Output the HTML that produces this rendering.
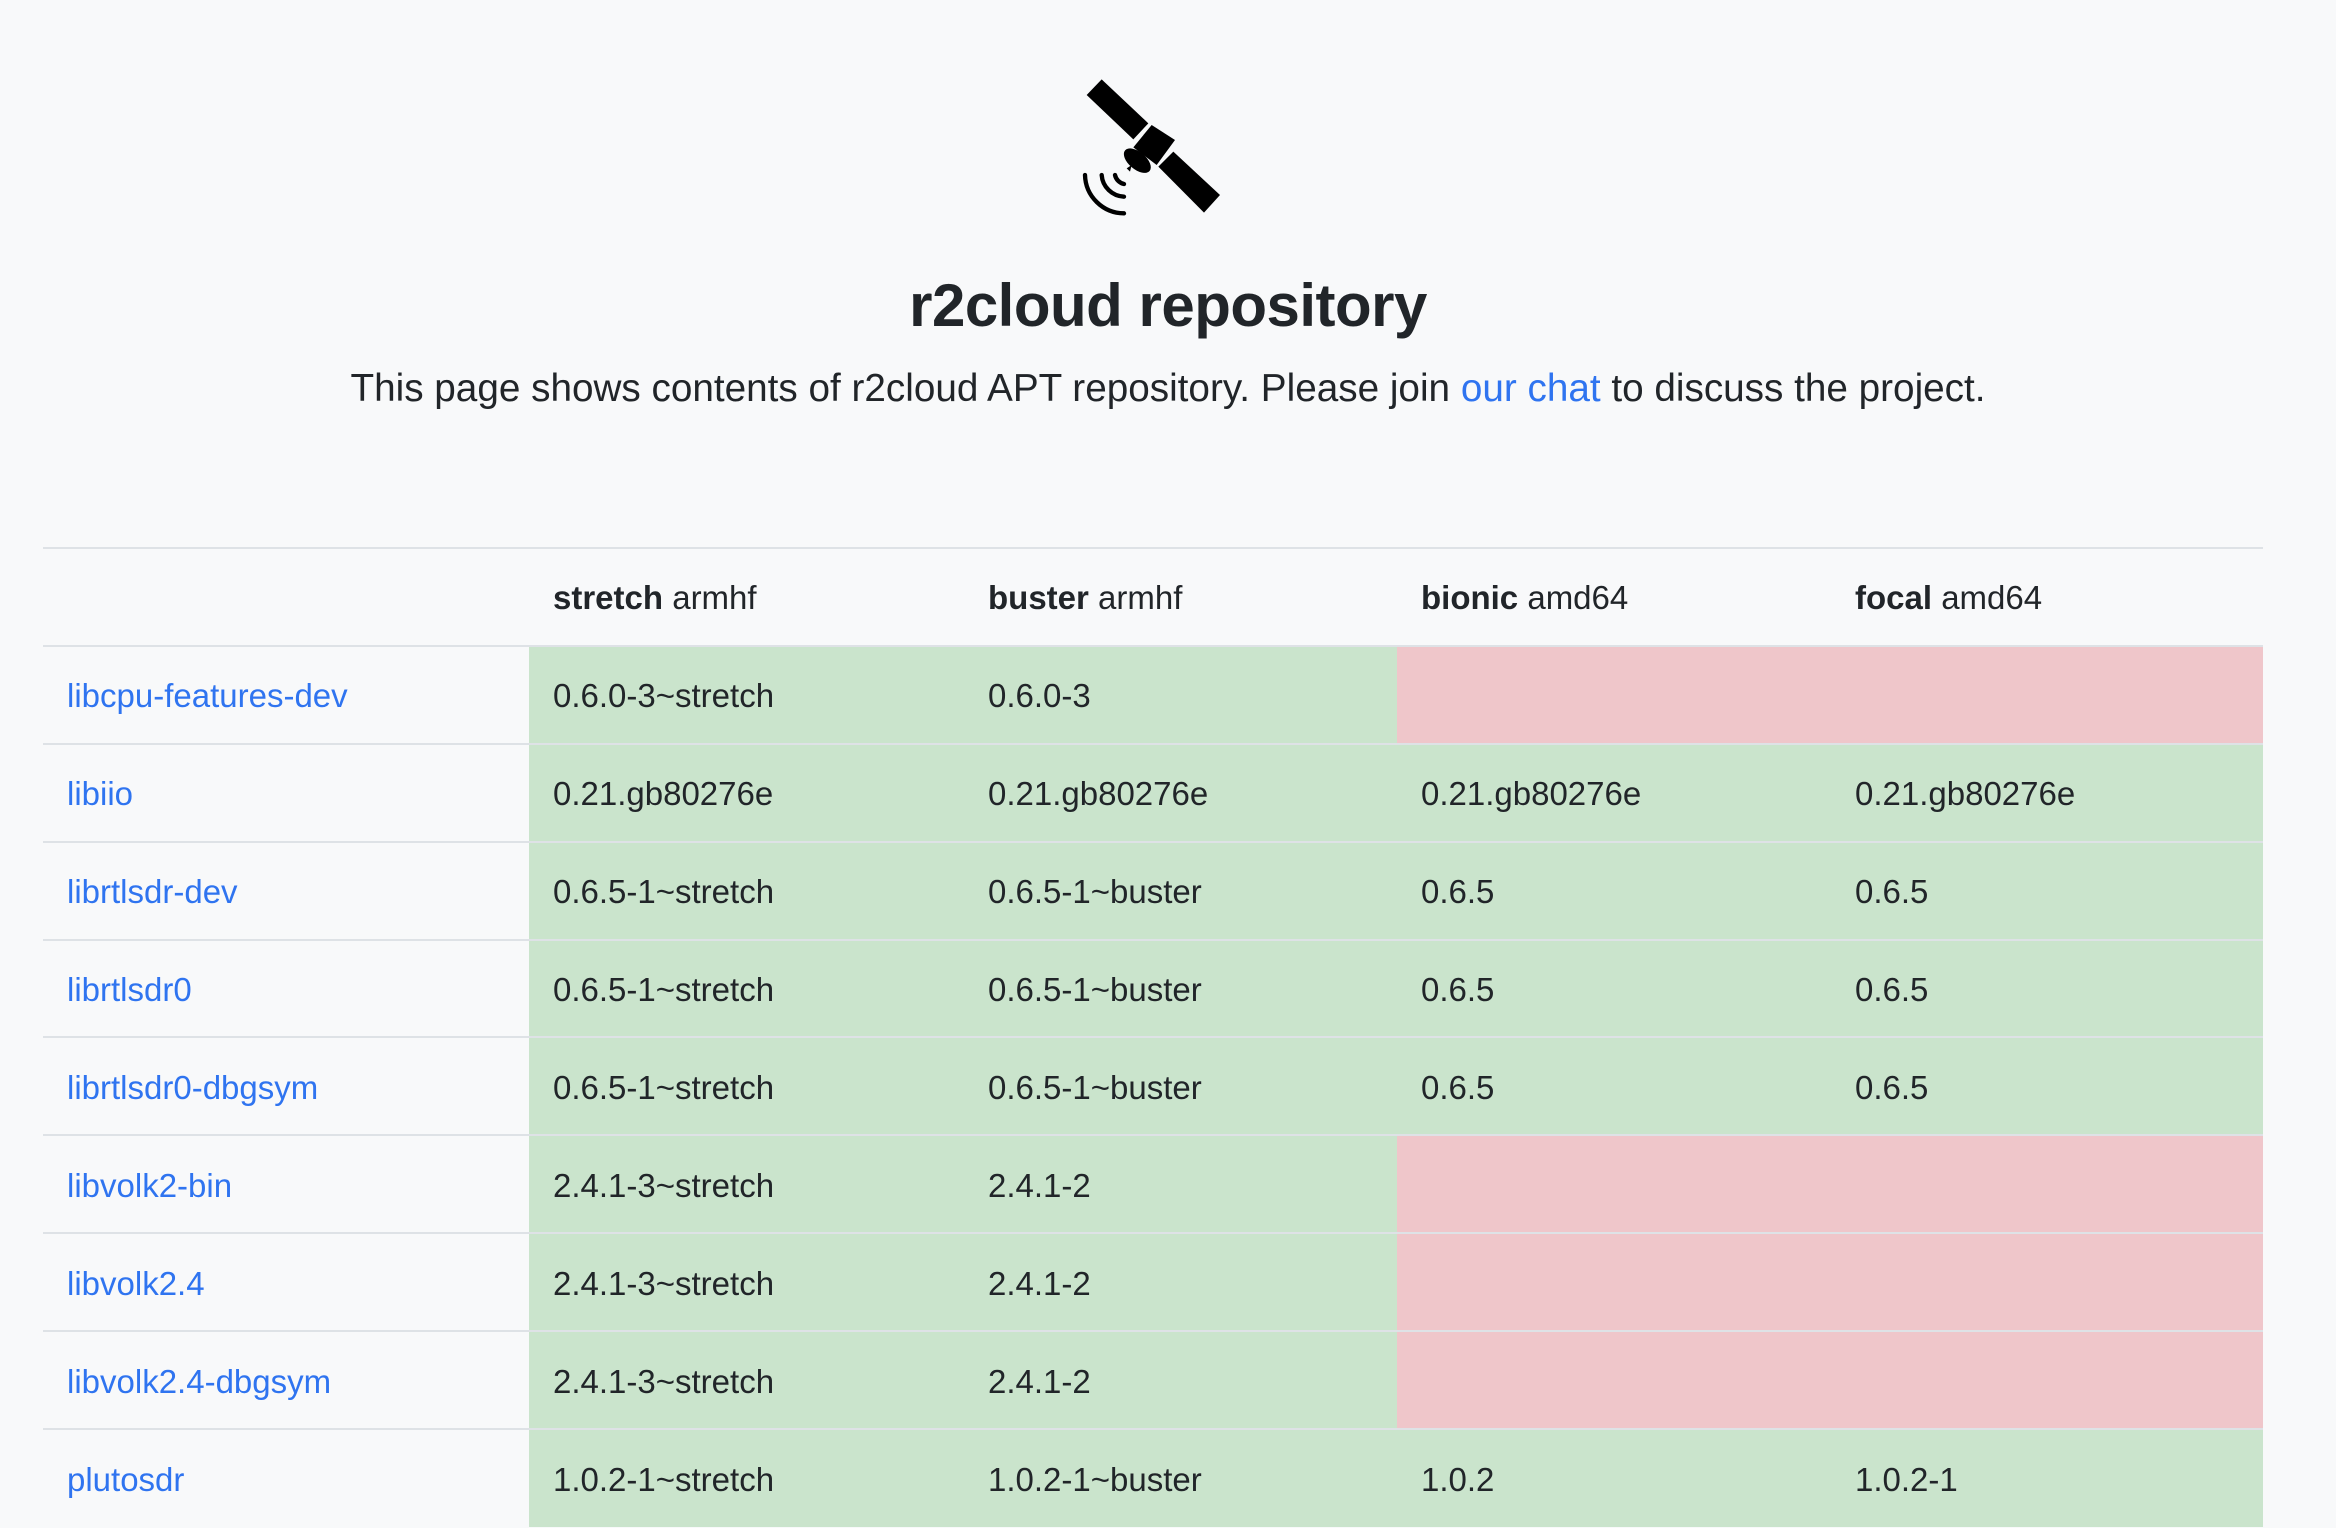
<!DOCTYPE html>
<html><head><meta charset="utf-8"><style>
html,body{margin:0;padding:0;background:#f8f9fa;width:2336px;height:1528px;overflow:hidden;font-family:"Liberation Sans",sans-serif;color:#212529}
.icon{position:absolute;left:1000px;top:40px;width:300px;height:200px}
h1{position:absolute;top:270px;left:0;width:2336px;text-align:center;margin:0;font-size:60px;line-height:72px;font-weight:bold;letter-spacing:-0.5px}
.lead{position:absolute;top:366px;left:0;width:2336px;text-align:center;font-size:38.7px;line-height:46px;margin:0}
a{color:#2f74f0;text-decoration:none}
table{position:absolute;left:43px;top:547px;width:2220px;border-collapse:collapse;font-size:33px;table-layout:fixed}
td,th{height:97.9px;padding:3px 0 0 24px;border-top:2px solid #dee2e6;text-align:left;vertical-align:middle;box-sizing:border-box}
th{font-weight:normal}
th b{font-weight:bold}
.g{background:#cae4cc}.r{background:#efc6ca}
</style></head><body>
<svg class="icon" viewBox="0 0 900 600">
<polygon points="305,118 260,165 400,298 445,250" fill="#000"/>
<polygon points="455,255 525,300 470,375 400,322" fill="#000"/>
<polygon points="520,335 475,380 612,518 660,465" fill="#000"/>
<ellipse cx="412" cy="362" rx="48" ry="26" transform="rotate(40 412 362)" fill="#000"/>
<polygon points="380,385 395,375 390,395" fill="#000"/>
<g fill="none" stroke="#000" stroke-width="13" stroke-linecap="round">
<path d="M345,405 A35,35 0 0 0 372,432"/>
<path d="M305,405 A70,70 0 0 0 372,470"/>
<path d="M255,405 A118,118 0 0 0 372,520"/>
</g>
</svg>
<h1>r2cloud repository</h1>
<p class="lead">This page shows contents of r2cloud APT repository. Please join <a>our chat</a> to discuss the project.</p>
<table>
<colgroup><col style="width:486px"><col style="width:435px"><col style="width:433px"><col style="width:434px"><col style="width:432px"></colgroup>
<tr><th></th><th><b>stretch</b> armhf</th><th><b>buster</b> armhf</th><th><b>bionic</b> amd64</th><th><b>focal</b> amd64</th></tr>
<tr><td><a>libcpu-features-dev</a></td><td class="g">0.6.0-3~stretch</td><td class="g">0.6.0-3</td><td class="r"></td><td class="r"></td></tr>
<tr><td><a>libiio</a></td><td class="g">0.21.gb80276e</td><td class="g">0.21.gb80276e</td><td class="g">0.21.gb80276e</td><td class="g">0.21.gb80276e</td></tr>
<tr><td><a>librtlsdr-dev</a></td><td class="g">0.6.5-1~stretch</td><td class="g">0.6.5-1~buster</td><td class="g">0.6.5</td><td class="g">0.6.5</td></tr>
<tr><td><a>librtlsdr0</a></td><td class="g">0.6.5-1~stretch</td><td class="g">0.6.5-1~buster</td><td class="g">0.6.5</td><td class="g">0.6.5</td></tr>
<tr><td><a>librtlsdr0-dbgsym</a></td><td class="g">0.6.5-1~stretch</td><td class="g">0.6.5-1~buster</td><td class="g">0.6.5</td><td class="g">0.6.5</td></tr>
<tr><td><a>libvolk2-bin</a></td><td class="g">2.4.1-3~stretch</td><td class="g">2.4.1-2</td><td class="r"></td><td class="r"></td></tr>
<tr><td><a>libvolk2.4</a></td><td class="g">2.4.1-3~stretch</td><td class="g">2.4.1-2</td><td class="r"></td><td class="r"></td></tr>
<tr><td><a>libvolk2.4-dbgsym</a></td><td class="g">2.4.1-3~stretch</td><td class="g">2.4.1-2</td><td class="r"></td><td class="r"></td></tr>
<tr><td><a>plutosdr</a></td><td class="g">1.0.2-1~stretch</td><td class="g">1.0.2-1~buster</td><td class="g">1.0.2</td><td class="g">1.0.2-1</td></tr>
</table>
</body></html>
